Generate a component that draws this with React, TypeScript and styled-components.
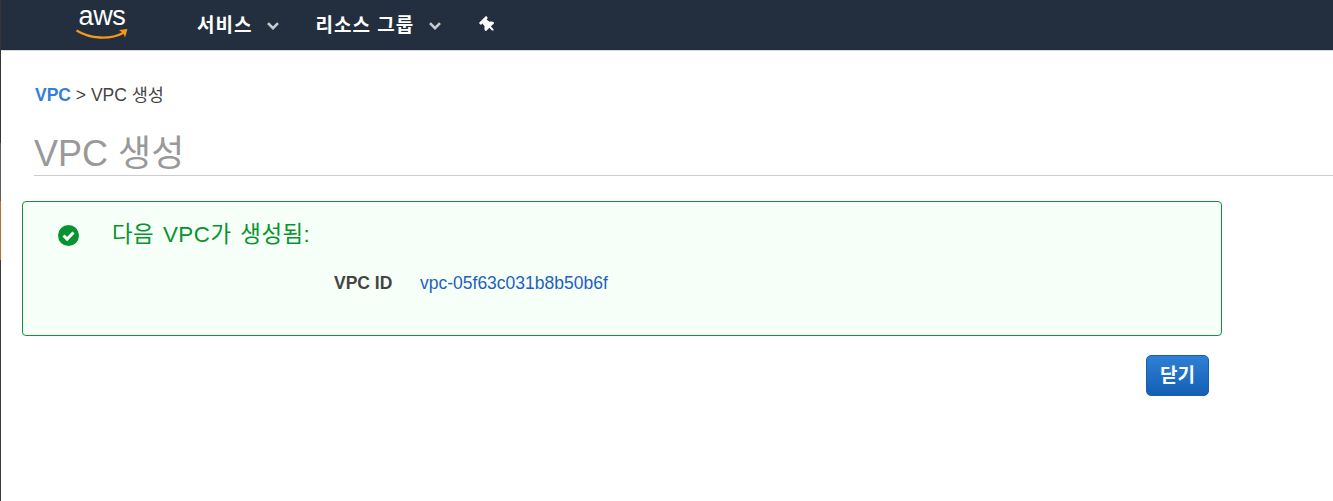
import React, { FC } from 'react';
import styled, { createGlobalStyle } from 'styled-components';
import { FaThumbtack } from 'react-icons/fa';

const GlobalStyle = createGlobalStyle`
    html, body {
        margin: 0;
        padding: 0;
        background: #fff;
        font-family: 'Liberation Sans', 'Noto Sans CJK KR', sans-serif;
    }
`;

const Shell = styled.div`
    display: flex;
    height: 501px;
    overflow: hidden;
`;

const EdgeStrip = styled.div`
    display: flex;
    flex: 0 0 1px;
    flex-direction: column;
`;

const EdgeSegment = styled.div<{ $color: string; $height: number | string }>`
    flex: ${(p) => (p.$height === 'fill' ? '1' : `0 0 ${p.$height}px`)};
    background: ${(p) => p.$color};
`;

const Page = styled.div`
    flex: 1;
    min-width: 0;
`;

const NavBar = styled.nav`
    display: flex;
    align-items: center;
    height: 51px;
    box-sizing: border-box;
    padding-left: 75px;
    background: #232f3e;
    border-bottom: 1px solid #d5d9dc;
    color: #fff;
`;

const Logo = styled.div`
    position: relative;
    width: 52px;
    height: 40px;
    margin-top: 2px;
    margin-right: 69px;
`;

const LogoWord = styled.span`
    display: block;
    text-align: center;
    font-family: 'Liberation Sans', sans-serif;
    font-size: 27px;
    line-height: 20px;
    letter-spacing: -0.4px;
    color: #fff;
`;

const Smile = styled.svg`
    position: absolute;
    left: 0;
    top: 23px;
`;

const NavItem = styled.div<{ $gap: number }>`
    display: flex;
    align-items: center;
    gap: 15px;
    margin-right: ${(p) => p.$gap}px;
    margin-top: -3px;
    font-size: 19px;
    font-weight: 700;
    letter-spacing: 1px;
`;

const Chevron = styled.svg`
    margin-top: 5px;
`;

const PinIcon = styled(FaThumbtack)`
    width: 16px;
    height: 16px;
    transform: rotate(-45deg);
`;

const Content = styled.main`
    padding: 34px 0 0 21px;
`;

const Breadcrumb = styled.div`
    padding-left: 13px;
    font-size: 17.5px;
    line-height: 20px;
    color: #444;
`;

const CrumbLink = styled.a`
    font-weight: 700;
    color: #337ed6;
`;

const Title = styled.h1`
    margin: 29px 0 0 12px;
    height: 41px;
    border-bottom: 1px solid #ccc;
    font-size: 36px;
    font-weight: 400;
    line-height: 40px;
    color: #999;
`;

const Alert = styled.section`
    display: flex;
    flex-direction: column;
    box-sizing: border-box;
    width: 1200px;
    height: 135px;
    margin-top: 25px;
    padding: 20px 0 0 35px;
    background: #f6fff8;
    border: 1px solid #16923e;
    border-radius: 4px;
`;

const AlertHeader = styled.div`
    display: flex;
    align-items: center;
    gap: 33px;
    color: #07942f;
    font-size: 22.4px;
    line-height: 26px;
    letter-spacing: 0.5px;
    word-spacing: 2px;
`;

const DetailRow = styled.div`
    display: flex;
    margin-top: 25px;
    padding-left: 276px;
    font-size: 17.5px;
    line-height: 20px;
`;

const DetailLabel = styled.span`
    width: 86px;
    font-weight: 700;
    color: #444;
`;

const DetailValue = styled.a`
    color: #1f5fbf;
`;

const Actions = styled.div`
    display: flex;
    justify-content: flex-end;
    width: 1187px;
    margin-top: 19px;
`;

const CloseButton = styled.button`
    width: 63px;
    height: 41px;
    padding: 0 0 4px;
    border: 1px solid #1a5fa8;
    border-radius: 5px;
    background: linear-gradient(#2f7fd6, #1260b4);
    color: #fff;
    font-family: inherit;
    font-size: 19px;
    font-weight: 700;
`;

const ChevronDown: FC = () => (
    <Chevron width="12" height="8" viewBox="0 0 12 8">
        <path d="M1 1.2 6 6.2l5-5" fill="none" stroke="#c9ccd0" strokeWidth="2.6" />
    </Chevron>
);

const App: FC = () => (
    <>
        <GlobalStyle />
        <Shell>
            <EdgeStrip>
                <EdgeSegment $color="#3b3531" $height={143} />
                <EdgeSegment $color="#5f5c5a" $height={58} />
                <EdgeSegment $color="#b5702d" $height={59} />
                <EdgeSegment $color="#3f3b38" $height="fill" />
            </EdgeStrip>
            <Page>
                <NavBar>
                    <Logo>
                        <LogoWord>aws</LogoWord>
                        <Smile width="52" height="12" viewBox="0 0 52 12">
                            <path d="M0.5 1.5C14 10 34 11 47 4" fill="none" stroke="#f7981d" strokeWidth="2.4" />
                            <path d="M43 1 51.5 0 49 8.5C48.5 6 46.5 3 43 1z" fill="#f7981d" />
                        </Smile>
                    </Logo>
                    <NavItem $gap={36}>
                        서비스
                        <ChevronDown />
                    </NavItem>
                    <NavItem $gap={39}>
                        리소스 그룹
                        <ChevronDown />
                    </NavItem>
                    <PinIcon />
                </NavBar>
                <Content>
                    <Breadcrumb>
                        <CrumbLink>VPC</CrumbLink> &gt; VPC 생성
                    </Breadcrumb>
                    <Title>VPC 생성</Title>
                    <Alert>
                        <AlertHeader>
                            <svg width="21" height="21" viewBox="0 0 21 21">
                                <circle cx="10.5" cy="10.5" r="10.5" fill="#07942f" />
                                <path d="M5.5 10.5l3.6 3.6 6.4-6.6" fill="none" stroke="#fff" strokeWidth="3" />
                            </svg>
                            다음 VPC가 생성됨:
                        </AlertHeader>
                        <DetailRow>
                            <DetailLabel>VPC ID</DetailLabel>
                            <DetailValue>vpc-05f63c031b8b50b6f</DetailValue>
                        </DetailRow>
                    </Alert>
                    <Actions>
                        <CloseButton>닫기</CloseButton>
                    </Actions>
                </Content>
            </Page>
        </Shell>
    </>
);

export default App;
